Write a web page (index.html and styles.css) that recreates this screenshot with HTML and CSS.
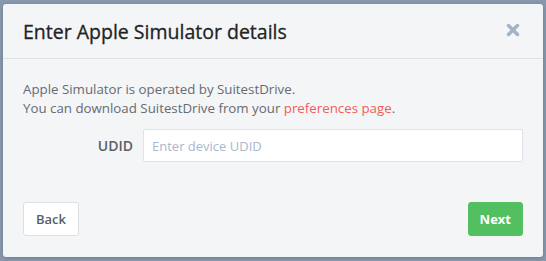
FILE: index.html
```html
<!DOCTYPE html>
<html lang="en">
<head>
    <meta charset="UTF-8">
    <title>Enter Apple Simulator details</title>
    <link rel="stylesheet" href="styles.css">
</head>
<body>
    <!-- Modal dialog -->
    <div class="modal">
        <div class="modal-header">
            <h2>Enter Apple Simulator details</h2>
            <button class="close-btn" aria-label="Close">
                <svg width="14" height="14" viewBox="0 0 14 14">
                    <path d="M2.5 2.5 L11.5 11.5 M11.5 2.5 L2.5 11.5" stroke="#a3b3c6" stroke-width="3.4" stroke-linecap="round"/>
                </svg>
            </button>
        </div>
        <div class="modal-body">
            <p>Apple Simulator is operated by SuitestDrive.<br>
            You can download SuitestDrive from your <a href="#">preferences page</a>.</p>
            <div class="form-row">
                <label for="udid">UDID</label>
                <input type="text" id="udid" placeholder="Enter device UDID">
            </div>
        </div>
        <div class="modal-footer">
            <button class="btn">Back</button>
            <button class="btn btn-green">Next</button>
        </div>
    </div>
</body>
</html>
```

FILE: styles.css
```css
body {
    margin: 0;
    padding: 4px 3px;
    background-color: #8898ae;
    font-family: "Open Sans", "Noto Sans", sans-serif;
}

/* Dialog box */
.modal {
    width: 540px;
    height: 253px;
    background-color: #f4f5f7;
    border-radius: 3px;
    box-shadow: 0 1px 4px rgba(0, 0, 0, 0.2);
    display: flex;
    flex-direction: column;
}

.modal-header {
    height: 54px;
    border-bottom: 1px solid #dcdfe4;
    display: flex;
    align-items: center;
    justify-content: space-between;
    padding: 0 20px;
}

.modal-header h2 {
    margin: 0;
    font-size: 19.5px;
    font-weight: 400;
    color: #222;
    -webkit-text-stroke: 0.3px #222;
}

.close-btn {
    background: none;
    border: none;
    padding: 0;
    margin: 1px 3px 0 0;
    cursor: pointer;
}

.modal-body {
    padding: 21px 20px 0;
    flex: 1;
}

.modal-body p {
    margin: 0;
    font-size: 13.3px;
    line-height: 19px;
    color: #666b72;
}

.modal-body a {
    color: #f35b5b;
    text-decoration: none;
}

.form-row {
    display: flex;
    align-items: center;
    margin-top: 11px;
}

.form-row label {
    width: 110px;
    text-align: right;
    padding-right: 10px;
    font-size: 14px;
    font-weight: 600;
    color: #5a5f66;
}

.form-row input {
    flex: 1;
    height: 33px;
    box-sizing: border-box;
    border: 1px solid #dfe2e6;
    border-radius: 2px;
    padding: 0 8px;
    font-family: inherit;
    font-size: 13px;
    background: #fff;
}

.form-row input::placeholder {
    color: #a9b8cb;
}

.modal-footer {
    display: flex;
    justify-content: space-between;
    padding: 0 20px 21px;
}

.btn {
    height: 34px;
    padding: 0 12px;
    border: 1px solid #dcdfe4;
    border-radius: 3px;
    background-color: #fff;
    color: #5a5f66;
    font-family: inherit;
    font-size: 13px;
    font-weight: 600;
    cursor: pointer;
}

.btn-green {
    background-color: #52bf60;
    border-color: #52bf60;
    color: #fff;
    font-weight: 700;
    padding: 0 11px;
}
```
